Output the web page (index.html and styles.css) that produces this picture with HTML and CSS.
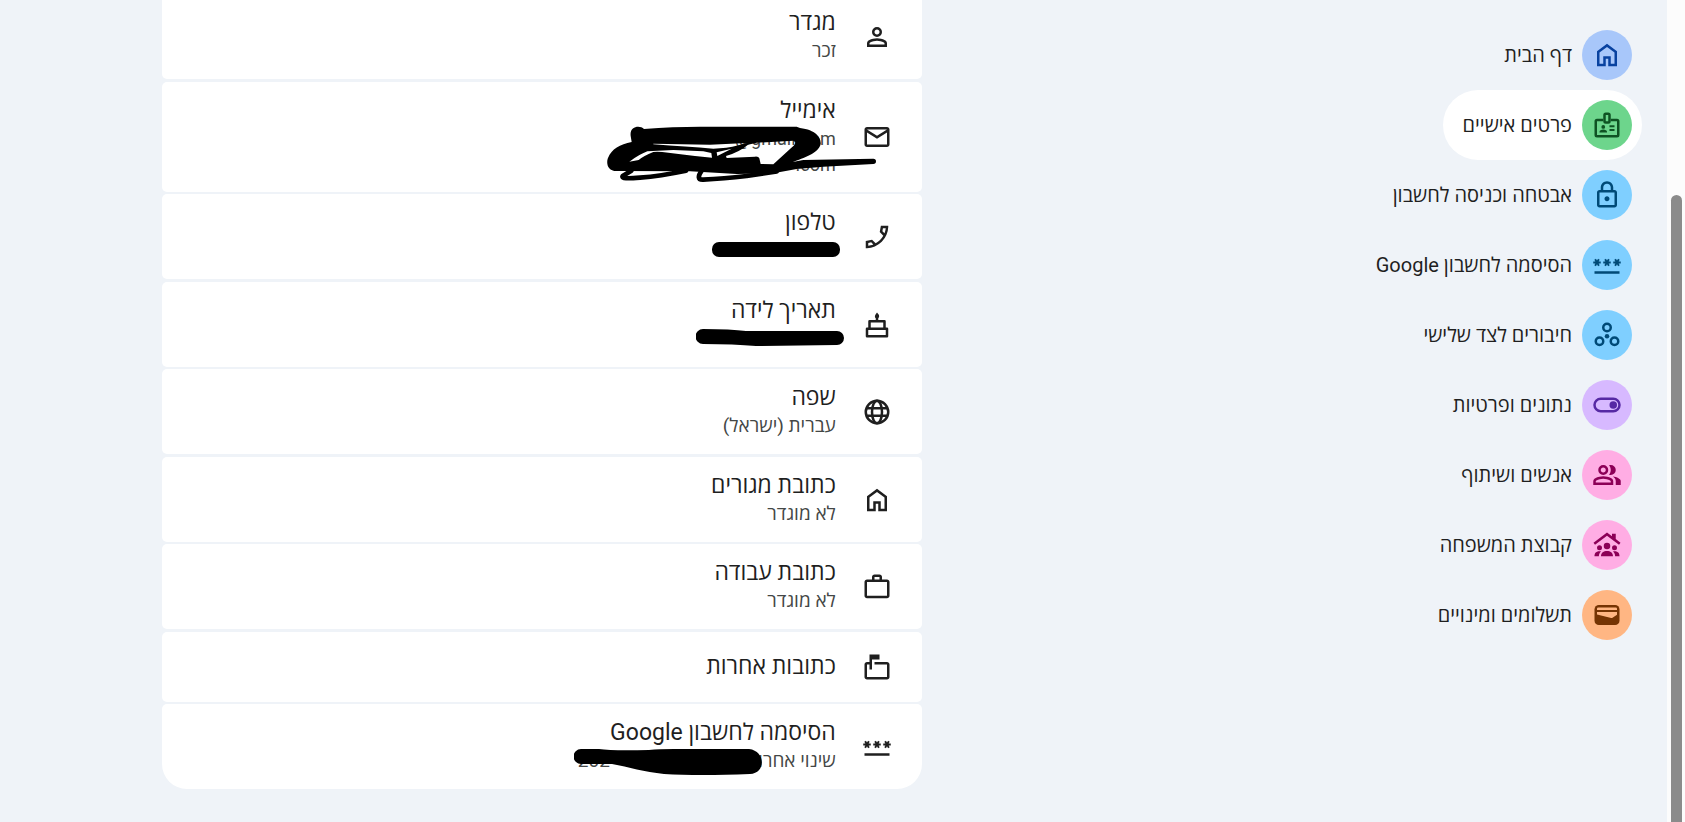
FILE: index.html
```html
<!DOCTYPE html>
<html lang="he" dir="rtl">
<head>
<meta charset="utf-8">
<meta name="viewport" content="width=device-width, initial-scale=1">
<title>פרטים אישיים</title>
<link rel="stylesheet" href="styles.css">
</head>
<body>
<svg class="defs" width="0" height="0" aria-hidden="true">
  <symbol id="home" viewBox="0 0 24 24"><path d="M6 19h3v-6h6v6h3v-9l-6-4.500L6 10zm-2 2V9l8-6 8 6v12h-7v-6h-2v6z"/></symbol>
  <symbol id="password" viewBox="0 0 24 24"><path d="M2 17h20v2H2zm1.150-4.050L4 11.470l.850 1.480 1.300-.750-.850-1.480H7v-1.500H5.300l.850-1.470L4.850 7 4 8.470 3.150 7l-1.300.750.850 1.470H1v1.500h1.700l-.850 1.480zm6.700-.750 1.300.750.850-1.480.850 1.480 1.300-.750-.850-1.480H15v-1.500h-1.700l.850-1.470-1.300-.750L12 8.470 11.150 7l-1.300.750.850 1.470H9v1.500h1.700zM23 9.220h-1.700l.850-1.470-1.300-.750L20 8.470 19.150 7l-1.300.750.850 1.470H17v1.500h1.700l-.850 1.480 1.300.750.850-1.480.850 1.480 1.300-.750-.850-1.480H23z"/></symbol>
</svg>
<div class="page">
  <nav class="nav" aria-label="ניווט ראשי">
    <a class="nav-item" href="#home-page"><span class="badge blue"><svg class="icon"><use href="#home"/></svg></span>דף הבית</a>
    <a class="nav-item active" href="#personal" aria-current="page"><span class="badge green"><svg class="icon" viewBox="0 0 24 24"><path class="line" d="M9 8H4a1 1 0 0 0-1 1v11a1 1 0 0 0 1 1h16a1 1 0 0 0 1-1V9a1 1 0 0 0-1-1h-5"/><rect class="line" x="10" y="3" width="4" height="7" rx="1"/><circle cx="9" cy="13.500" r="1.500"/><path d="M6 18v-.600c0-1.200 1.500-1.900 3-1.900s3 .700 3 1.900v.600zM14 12.200h4v1.500h-4zM14 15.200h4v1.500h-4z"/></svg></span>פרטים אישיים</a>
    <a class="nav-item" href="#security"><span class="badge sky"><svg class="icon" viewBox="0 0 24 24"><path d="M18 8h-1V6c0-2.760-2.240-5-5-5S7 3.240 7 6v2H6c-1.100 0-2 .900-2 2v10c0 1.100.900 2 2 2h12c1.100 0 2-.900 2-2V10c0-1.100-.900-2-2-2zM9 6c0-1.660 1.340-3 3-3s3 1.340 3 3v2H9zm9 14H6V10h12zm-6-3c1.100 0 2-.900 2-2s-.900-2-2-2-2 .900-2 2 .900 2 2 2z"/></svg></span>אבטחה וכניסה לחשבון</a>
    <a class="nav-item" href="#password-page"><span class="badge sky"><svg class="icon"><use href="#password"/></svg></span>הסיסמה לחשבון Google</a>
    <a class="nav-item" href="#connections"><span class="badge sky"><svg class="icon" viewBox="0 0 24 24"><g class="line"><circle cx="12" cy="6" r="3"/><circle cx="6" cy="17" r="3"/><circle cx="18" cy="17" r="3"/></g><circle cx="12" cy="13" r="1.800"/></svg></span>חיבורים לצד שלישי</a>
    <a class="nav-item" href="#privacy"><span class="badge purple"><svg class="icon" viewBox="0 0 24 24"><rect class="line" x="2" y="7" width="20" height="10" rx="5"/><circle cx="17" cy="12" r="3"/></svg></span>נתונים ופרטיות</a>
    <a class="nav-item" href="#people"><span class="badge pink"><svg class="icon" viewBox="0 0 24 24"><path d="M1 20v-2.800q0-.850.438-1.562T2.600 14.550q1.550-.775 3.150-1.162T9 13t3.250.388 3.150 1.162q.725.375 1.163 1.088T17 17.200V20zm18 0v-3q0-1.100-.612-2.113T16.650 13.150q1.275.150 2.400.513t2.100.887q.900.500 1.375 1.113T23 17v3zM9 12q-1.650 0-2.825-1.175T5 8t1.175-2.825T9 4t2.825 1.175T13 8t-1.175 2.825T9 12m10-4q0 1.650-1.175 2.825T15 12q-.275 0-.700-.063T13.600 11.800q.675-.800 1.037-1.775T15 8t-.362-2.025T13.600 4.200q.350-.125.700-.163T15 4q1.650 0 2.825 1.175T19 8M3 18h12v-.800q0-.275-.137-.500t-.363-.350q-1.350-.675-2.725-1.012T9 15t-2.775.338T3.500 16.350q-.225.125-.363.350T3 17.200zm6-8q.825 0 1.413-.587T11 8t-.587-1.412T9 6t-1.412.588T7 8t.588 1.413T9 10"/></svg></span>אנשים ושיתוף</a>
    <a class="nav-item" href="#family"><span class="badge pink"><svg class="icon" viewBox="0 0 24 24"><path d="M12 2 1.200 10.100l1.200 1.600L12 4.500l9.600 7.200 1.200-1.600L19 7.200V3h-3v2zM7.200 21c0-2.800 2.100-4.200 4.800-4.200s4.800 1.400 4.800 4.200zM2 21c0-1.900.700-4 4.100-4 .500 0 .800.100 1.100.200C6 18.200 5.500 19.500 5.500 21zM22 21c0-1.900-.700-4-4.100-4-.500 0-.800.100-1.100.200 1.200 1 1.700 2.300 1.700 3.800z"/><circle cx="12" cy="12.800" r="2.600"/><circle cx="6" cy="14.200" r="2"/><circle cx="18" cy="14.200" r="2"/></svg></span>קבוצת המשפחה</a>
    <a class="nav-item" href="#payments"><span class="badge orange"><svg class="icon" viewBox="0 0 24 24"><rect x="2" y="4" width="20" height="16" rx="3.500"/><path class="cut" d="M5 6h14a1 1 0 0 1 1 1v1H4V7a1 1 0 0 1 1-1zM4 9.500h16v2.300l-3.600 2.300a1.500 1.500 0 0 1-1.100.200L4 11.500z"/></svg></span>תשלומים ומינויים</a>
  </nav>

  <main class="main">
    <ul class="list">
      <li class="row row-cut">
        <svg class="icon" viewBox="0 0 24 24"><path d="M12 12q-1.650 0-2.825-1.175T8 8t1.175-2.825T12 4t2.825 1.175T16 8t-1.175 2.825T12 12m-8 8v-2.800q0-.850.438-1.562T5.600 14.550q1.550-.775 3.150-1.162T12 13t3.250.388 3.150 1.162q.725.375 1.163 1.088T20 17.200V20zm2-2h12v-.800q0-.275-.137-.500t-.363-.350q-1.350-.675-2.725-1.012T12 15t-2.775.338T6.500 16.350q-.225.125-.363.350T6 17.200zm6-8q.825 0 1.413-.587T14 8t-.587-1.412T12 6t-1.412.588T10 8t.588 1.413T12 10"/></svg>
        <div><h2 class="title">מגדר</h2><p class="sub">זכר</p></div>
      </li>
      <li class="row">
        <svg class="icon" viewBox="0 0 24 24"><path d="M22 6c0-1.100-.900-2-2-2H4c-1.100 0-2 .900-2 2v12c0 1.100.900 2 2 2h16c1.100 0 2-.900 2-2zm-2 0v.010L12 11 4 6zm0 12H4V8.300l8 5.100 8-5.100z"/></svg>
        <div><h2 class="title">אימייל</h2><p class="sub mail" dir="ltr">@gmail.com</p><p class="sub mail" dir="ltr">.com</p></div>
        <svg class="ink ink-email" viewBox="0 0 900 240" aria-hidden="true">
          <path fill-rule="evenodd" d="M122 78C118 48 150 45 162 57Q250 50 330 50L620 50L630 54C680 60 694 85 692 102C686 130 640 144 608 156L640 150L850 146A8 8 0 0 1 850 162L700 170L620 177L550 190L440 192L300 184L80 183C50 183 48 155 55 142C64 118 90 103 125 96ZM118 155Q150 132 172 124L250 120L340 124L364 129L366 143L315 138L235 128Q205 124 190 126Q160 138 146 150ZM190 101L360 104L470 99L445 106Q410 116 370 116Q290 110 190 103ZM408 138Q450 125 474 104L500 98L610 92Q625 98 600 117L550 163L512 162L508 145Q506 139 495 140L410 144ZM380 127L425 116L382 138Z"/>
          <path class="scrawl" d="M124 182L98 198C94 206 112 206 150 203Q210 198 288 182M335 182C324 198 322 210 340 209Q400 206 470 198L560 184"/>
        </svg>
      </li>
      <li class="row">
        <svg class="icon flip" viewBox="0 0 24 24"><path d="M19.950 21Q16.800 21 13.750 19.600T8.200 15.800 4.400 10.250 3 4.050V3h5.900l.925 5.025-2.850 2.875q1.050 1.850 2.600 3.400t3.500 2.700l2.900-2.900 5.025 1.025V21zM6.025 9l1.650-1.650L7.250 5H5.025q.125 1.025.350 2.025T6.025 9m8.950 8.950q.975.425 1.988.675t2.037.325v-2.200l-2.350-.475z"/></svg>
        <div><h2 class="title">טלפון</h2><p class="sub">&nbsp;</p></div>
        <svg class="ink ink-phone" viewBox="0 0 128 15" aria-hidden="true"><rect width="128" height="15" rx="7"/></svg>
      </li>
      <li class="row">
        <svg class="icon" viewBox="0 0 24 24"><path d="M12 2Q14 4 13.700 5.200 13.500 6.200 13 6.500V8h5a1 1 0 0 1 1 1v5h1a1 1 0 0 1 1 1v6a1 1 0 0 1-1 1H4a1 1 0 0 1-1-1v-6a1 1 0 0 1 1-1h1V9a1 1 0 0 1 1-1h5V6.500Q10.300 6 10.300 5.200 10.300 4 12 2zM7 10v4h10v-4zM5 16v4h14v-4z"/></svg>
        <div><h2 class="title">תאריך לידה</h2><p class="sub">&nbsp;</p></div>
        <svg class="ink ink-birth" viewBox="0 0 148 17" aria-hidden="true"><path d="M7 0Q35 0 50 2L141 2A7 7 0 0 1 141 16L60 17Q38 15 7 15A7 7 0 0 1 7 0Z"/></svg>
      </li>
      <li class="row">
        <svg class="icon" viewBox="0 0 24 24"><g class="line"><circle cx="12" cy="12" r="9"/><ellipse cx="12" cy="12" rx="4" ry="9"/><path d="M3.500 9h17M3.500 15h17"/></g></svg>
        <div><h2 class="title">שפה</h2><p class="sub">עברית (ישראל)</p></div>
      </li>
      <li class="row">
        <svg class="icon"><use href="#home"/></svg>
        <div><h2 class="title">כתובת מגורים</h2><p class="sub">לא מוגדר</p></div>
      </li>
      <li class="row">
        <svg class="icon" viewBox="0 0 24 24"><path d="M4 21q-.825 0-1.412-.587T2 19V8q0-.825.588-1.412T4 6h4V4q0-.825.588-1.412T10 2h4q.825 0 1.413.588T16 4v2h4q.825 0 1.413.588T22 8v11q0 .825-.587 1.413T20 21zm0-2h16V8H4zm6-13h4V4h-4z"/></svg>
        <div><h2 class="title">כתובת עבודה</h2><p class="sub">לא מוגדר</p></div>
      </li>
      <li class="row">
        <svg class="icon" viewBox="0 0 24 24"><path d="M6 2h8v4H8v8H6v-4H4v10h16V10H10V8h10q.825 0 1.413.588T22 10v10q0 .825-.587 1.413T20 22H4q-.825 0-1.412-.587T2 20V10q0-.825.588-1.412T4 8h2z"/></svg>
        <div><h2 class="title">כתובות אחרות</h2></div>
      </li>
      <li class="row">
        <svg class="icon"><use href="#password"/></svg>
        <div><h2 class="title">הסיסמה לחשבון Google</h2><p class="sub split"><span>שינוי אחרון</span><span>202</span></p></div>
        <svg class="ink ink-password" viewBox="0 0 188 26" aria-hidden="true"><path d="M7 0H25Q38 2 75 1Q85 0 100 0H175C192 2 192 24 176 25Q125 27 90 25C70 23 55 18 38 15H7A7 7 0 0 1 7 0Z"/></svg>
      </li>
    </ul>
  </main>
  <div class="scrollbar" aria-hidden="true"><div class="thumb"></div></div>
</div>
</body>
</html>
```

FILE: styles.css
```css
* { box-sizing: border-box; }

body {
  margin: 0;
  background: #eff3f8;
  color: #1f1f1f;
  font-family: Roboto, "Open Sans", "Noto Sans", sans-serif;
  overflow: hidden;
}

h2, p, ul { margin: 0; padding: 0; }

.defs { position: absolute; }

.page {
  display: flex;
  min-height: 100vh;
}

.icon {
  flex: none;
  width: 30px;
  height: 30px;
  fill: currentColor;
}

.line {
  fill: none;
  stroke: currentColor;
  stroke-width: 2;
}

.flip { transform: scaleX(-1); }

.scrollbar {
  order: -1;
  flex: none;
  display: flex;
  flex-direction: column;
  width: 18px;
  height: 100vh;
  padding: 195px 3px 0 4px;
  background: #fcfcfc;
}

.thumb {
  flex: 1;
  border-radius: 6px 6px 0 0;
  background: #8b8b8b;
}

.nav {
  flex: 0 1 calc((100% - 18px) * 0.35);
  display: flex;
  flex-direction: column;
  align-items: flex-start;
  padding: 20px 25px;
}

.nav-item {
  display: flex;
  align-items: center;
  gap: 10px;
  height: 70px;
  padding: 10px 10px 10px 20px;
  border-radius: 35px;
  color: inherit;
  font-size: 20px;
  line-height: 25px;
  text-decoration: none;
}

.active { background: #fff; }

.badge {
  display: grid;
  place-items: center;
  width: 50px;
  height: 50px;
  border-radius: 50%;
}

.blue { background: #a8c7fa; color: #0842a0; }
.green { background: #6dd58c; color: #0f5223; }
.sky { background: #7fcfff; color: #004a77; }
.purple { background: #d7b9ff; color: #5629a4; }
.pink { background: #ffade4; color: #8c0057; }
.orange { background: #ffb683; color: #753403; }
.cut { fill: #ffb683; }

.main { flex: 1; }

.list {
  display: flex;
  flex-direction: column;
  gap: 2px;
  max-width: 760px;
  margin: 0 auto;
  list-style: none;
}

.row {
  position: relative;
  display: flex;
  align-items: center;
  gap: 26px;
  min-height: 70px;
  padding: 15px 30px;
  border-radius: 5px;
  background: #fff;
}

.row:nth-child(even) { margin-top: 1px; }

.row-cut { margin-top: -6px; }

.row:last-child { border-radius: 5px 5px 25px 25px; }

.title {
  font-size: 23px;
  font-weight: 400;
  line-height: 28px;
}

.sub {
  color: #444746;
  font-size: 19px;
  line-height: 25px;
}

.title + .sub { line-height: 27px; }

.sub[dir="ltr"] { text-align: right; }
.mail { font-size: 18px; }

.split {
  display: flex;
  justify-content: space-between;
  width: 258px;
}

.ink {
  position: absolute;
  fill: #000;
}

.scrawl {
  fill: none;
  stroke: #000;
  stroke-width: 14;
  stroke-linecap: round;
  stroke-linejoin: round;
}

.ink-email { top: 28px; right: 32px; width: 300px; height: 80px; }
.ink-phone { top: 48px; right: 82px; width: 128px; height: 15px; }
.ink-birth { top: 47px; right: 78px; width: 148px; height: 17px; }
.ink-password { top: 45px; right: 160px; width: 188px; height: 26px; }
```
